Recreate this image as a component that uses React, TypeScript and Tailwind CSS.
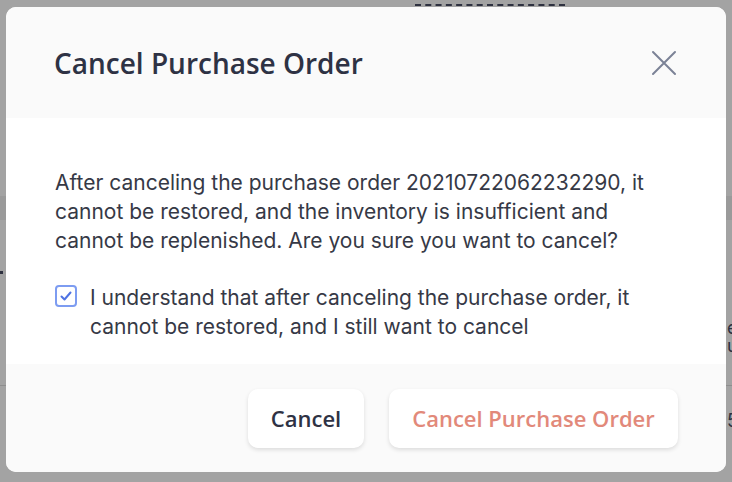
import React, { useState } from "react";

const heading = { fontFamily: '"Open Sans", "Noto Sans", sans-serif' };
const bodyFont = { fontFamily: 'Inter, Roboto, "Liberation Sans", sans-serif' };

function Backdrop() {
  // faint bits of the page behind the overlay
  return (
    <div className="absolute inset-0 bg-[#a3a3a3]">
      <div className="absolute left-[415px] top-[4px] w-[150px] border-t-2 border-dashed border-[#2e3140]" />
      <div className="absolute left-0 right-0 top-[196px] h-[24px] bg-[#9a9a9a]" />
      <div className="absolute left-0 right-0 top-[385px] h-px bg-[#8e8e8e]" />
      <div className="absolute left-0 top-[271px] h-[3px] w-[3px] bg-[#2e3140]" />
      <div className="absolute left-[727px] top-[320px] text-[18px] leading-[16px] text-[#2e3140]" style={bodyFont}>
        e
      </div>
      <div className="absolute left-[727px] top-[338px] text-[18px] leading-[16px] text-[#2e3140]" style={bodyFont}>
        u
      </div>
      <div className="absolute left-[727px] top-[412px] text-[18px] leading-[18px] text-[#2e3140]" style={bodyFont}>
        5
      </div>
    </div>
  );
}

export default function App() {
  const [agreed, setAgreed] = useState(true);

  return (
    <div className="relative h-[482px] w-[732px] overflow-hidden">
      <Backdrop />
      <div className="absolute left-[6px] top-[7px] flex h-[465px] w-[720px] flex-col overflow-hidden rounded-[10px] bg-white">
        <div className="flex h-[111px] items-center justify-between bg-[#fafafa] pl-[48px] pr-[44px]">
          <h2 className="text-[28px] font-semibold text-[#2e3244]" style={heading}>
            Cancel Purchase Order
          </h2>
          <button className="flex h-[36px] w-[36px] items-center justify-center text-[#7b8296]">
            <svg width="26" height="26" viewBox="0 0 26 26" fill="none" stroke="currentColor" strokeWidth="2" strokeLinecap="round">
              <path d="M2 2 L24 24 M24 2 L2 24" />
            </svg>
          </button>
        </div>

        <div className="flex h-[246px] flex-col bg-white pl-[49px] pr-[70px] pt-[50px]" style={bodyFont}>
          <p className="text-[21px] leading-[29px] text-[#363946]">
            After canceling the purchase order 20210722062232290, it cannot be restored, and the inventory is
            insufficient and cannot be replenished. Are you sure you want to cancel?
          </p>
          <label className="mt-[28px] flex items-start gap-[13px] text-[21px] leading-[29px] text-[#363946]">
            <button
              onClick={() => setAgreed(!agreed)}
              className="mt-[2px] flex h-[22px] w-[22px] shrink-0 items-center justify-center rounded-[4px] border-2 border-[#7d9cf1] bg-white"
            >
              {agreed && (
                <svg width="14" height="14" viewBox="0 0 14 14" fill="none" stroke="#4f73e3" strokeWidth="2" strokeLinecap="round" strokeLinejoin="round">
                  <path d="M2.5 7.5 L5.5 10.5 L11.5 3.5" />
                </svg>
              )}
            </button>
            <span>
              I understand that after canceling the purchase order, it cannot be restored, and I still want to
              cancel
            </span>
          </label>
        </div>

        <div className="flex flex-1 items-start justify-end gap-[25px] bg-[#fafafa] pr-[48px] pt-[25px]" style={heading}>
          <button className="h-[59px] w-[116px] rounded-[10px] bg-white text-[22px] font-semibold text-[#2e3244] shadow-[0_2px_4px_rgba(0,0,0,0.12)]">
            Cancel
          </button>
          <button className="h-[59px] w-[289px] rounded-[10px] bg-white text-[22px] font-semibold text-[#e2897a] shadow-[0_2px_4px_rgba(0,0,0,0.12)]">
            Cancel Purchase Order
          </button>
        </div>
      </div>
    </div>
  );
}
